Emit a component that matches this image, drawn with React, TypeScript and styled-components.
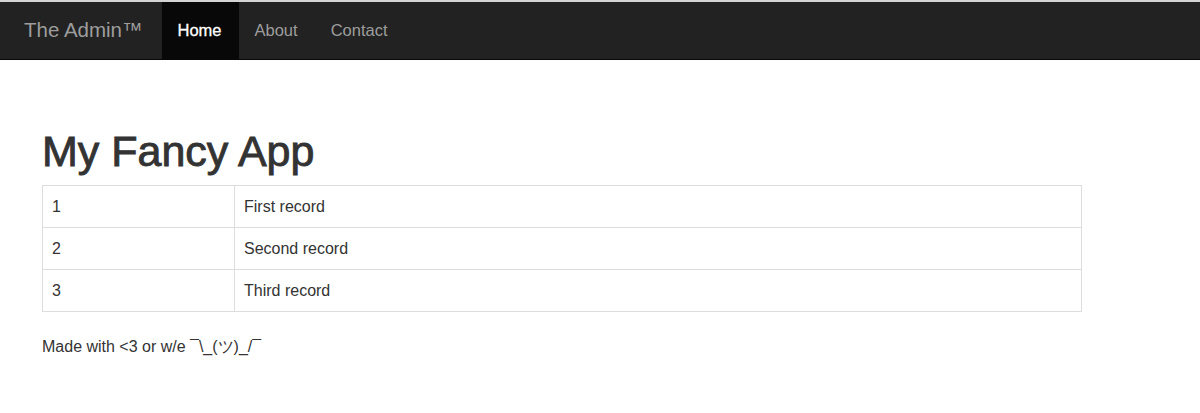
import React from "react";
import styled, { createGlobalStyle } from "styled-components";

const GlobalStyle = createGlobalStyle`
  html, body { margin: 0; padding: 0; background: #fff; }
  body {
    font-family: "Liberation Sans", Arial, Helvetica, sans-serif;
    font-size: 16px;
    line-height: 1.42857;
    color: #333;
  }
`;

const Page = styled.div`
  border-top: 2px solid #d4d4d4;
`;

const Navbar = styled.nav`
  display: flex;
  align-items: stretch;
  height: 57px;
  background: #222;
  border-bottom: 1px solid #080808;
`;

const Brand = styled.a`
  display: flex;
  align-items: center;
  padding: 0 19px 1px 24px;
  font-size: 20.5px;
  color: #9d9d9d;
  text-decoration: none;
`;

const NavList = styled.ul`
  display: flex;
  list-style: none;
  margin: 0;
  padding: 0;
`;

const NavItem = styled.li<{ $active?: boolean }>`
  display: flex;
  align-items: center;
  padding: 1px 17px 0 16px;
  background: ${(p) => (p.$active ? "#080808" : "transparent")};
  color: ${(p) => (p.$active ? "#fff" : "#9d9d9d")};
  font-size: 16.5px;
  -webkit-text-stroke: ${(p) => (p.$active ? "0.3px #fff" : "0")};
`;

const Container = styled.main`
  padding: 0 42px;
  width: 1040px;
`;

const Title = styled.h1`
  margin: 68px 0 10px;
  font-size: 43px;
  font-weight: 500;
  line-height: 1.1;
  color: #333;
  -webkit-text-stroke: 0.9px #333;
`;

const Table = styled.table`
  width: 100%;
  border-collapse: collapse;
  margin-bottom: 24px;
`;

const Cell = styled.td<{ $narrow?: boolean }>`
  border: 1px solid #ddd;
  padding: 9px 9px 9px 9px;
  height: 23px;
  line-height: 23px;
  width: ${(p) => (p.$narrow ? "173px" : "auto")};
  vertical-align: middle;
`;

const Footer = styled.p`
  margin: 0;
  font-size: 16px;
`;

const links = ["Home", "About", "Contact"];
const rows = [
  ["1", "First record"],
  ["2", "Second record"],
  ["3", "Third record"],
];

export default function App() {
  return (
    <Page>
      <GlobalStyle />
      <Navbar>
        <Brand>The Admin™</Brand>
        <NavList>
          {links.map((l, i) => (
            <NavItem key={l} $active={i === 0}>
              {l}
            </NavItem>
          ))}
        </NavList>
      </Navbar>
      <Container>
        <Title>My Fancy App</Title>
        <Table>
          <tbody>
            {rows.map(([n, t]) => (
              <tr key={n}>
                <Cell $narrow>{n}</Cell>
                <Cell>{t}</Cell>
              </tr>
            ))}
          </tbody>
        </Table>
        <Footer>Made with &lt;3 or w/e ¯\_(ツ)_/¯</Footer>
      </Container>
    </Page>
  );
}
